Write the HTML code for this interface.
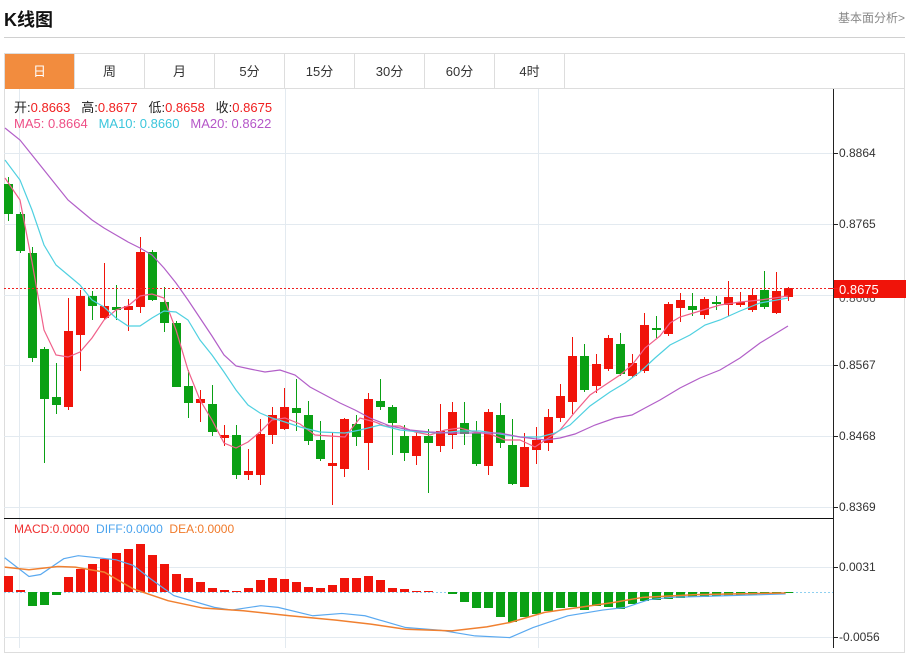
<!DOCTYPE html>
<html><head><meta charset="utf-8">
<style>
*{margin:0;padding:0;box-sizing:border-box}
body{width:909px;height:648px;background:#fff;font-family:"Liberation Sans","Noto Sans CJK SC",sans-serif;position:relative;overflow:hidden}
.title{position:absolute;left:4px;top:6px;font-size:18px;font-weight:bold;color:#111}
.more{position:absolute;right:4px;top:9px;font-size:12px;color:#888}
.hr{position:absolute;left:4px;top:37px;width:901px;height:1px;background:#d0d0d0}
.frame{position:absolute;left:4px;top:53px;width:901px;height:600px;border:1px solid #ddd}
.tabs{position:absolute;left:5px;top:54px;height:35px;display:flex;border-bottom:1px solid #ddd;width:899px}
.tabs div{width:70px;height:35px;border-right:1px solid #ddd;text-align:center;line-height:35px;font-size:13px;color:#333}
.tabs div.on{background:#f28c3e;color:#fff}
.leg{position:absolute;left:14px;font-size:13px;white-space:pre}
svg{position:absolute;left:0;top:0}
</style></head><body>
<div class="title">K线图</div>
<div class="more">基本面分析&gt;</div>
<div class="hr"></div>
<div class="frame"></div>
<div class="tabs"><div class="on">日</div><div>周</div><div>月</div><div>5分</div><div>15分</div><div>30分</div><div>60分</div><div>4时</div></div>
<svg id="s" width="909" height="648"></svg>
<div class="leg" style="top:97px;color:#222">开:<span style="color:#f02020">0.8663</span>   高:<span style="color:#f02020">0.8677</span>   低:<span style="color:#f02020">0.8658</span>   收:<span style="color:#f02020">0.8675</span></div>
<div class="leg" style="top:116px"><span style="color:#ee4f86">MA5: 0.8664</span>   <span style="color:#3cc6dc">MA10: 0.8660</span>   <span style="color:#b556c8">MA20: 0.8622</span></div>
<div class="leg" style="top:522px;font-size:12px"><span style="color:#f03030">MACD:0.0000</span>  <span style="color:#4aa3ee">DIFF:0.0000</span>  <span style="color:#f07a2a">DEA:0.0000</span></div>
<script>
var s='';
function L(x1,y1,x2,y2,c,w,extra){s+='<line x1="'+x1+'" y1="'+y1+'" x2="'+x2+'" y2="'+y2+'" stroke="'+c+'" stroke-width="'+(w||1)+'" '+(extra||'')+'/>';}
function R(x,y,w,h,c){s+='<rect x="'+x+'" y="'+y+'" width="'+w+'" height="'+Math.max(h,1)+'" fill="'+c+'"/>';}
function P(pts,c,w){s+='<polyline fill="none" stroke="'+c+'" stroke-width="'+(w||1.2)+'" points="'+pts.map(function(p){return p.join(',')}).join(' ')+'"/>';}
function T(x,y,t,c,f){s+='<text x="'+x+'" y="'+y+'" font-size="'+(f||12)+'" fill="'+(c||'#333')+'" font-family="Liberation Sans,sans-serif">'+t+'</text>';}
var G='#e3eaf0';
[153,224,295,365,436,507].forEach(function(y){L(4,y+.5,833,y+.5,G);});
[567,637].forEach(function(y){L(4,y+.5,833,y+.5,G);});
[19,285,538].forEach(function(x){L(x+.5,89,x+.5,648,G);});
L(904.5,89,904.5,648,'#ddd');
// candles: [top,bottom,high,low,color]
var C=[[184,214,177,221,'g'],[214,251,212,253,'g'],[253,358,247,362,'g'],[349,399,347,463,'g'],[397,405,363,414,'g'],[331,407,298,410,'r'],[296,335,290,371,'r'],[296,306,291,320,'g'],[306,318,263,320,'r'],[307,310,285,320,'g'],[306,310,299,331,'r'],[252,307,237,313,'r'],[252,300,250,301,'g'],[302,323,287,332,'g'],[323,387,321,387,'g'],[386,403,370,418,'g'],[399,403,390,422,'r'],[404,432,385,436,'g'],[435,438,425,446,'r'],[435,475,425,479,'g'],[471,475,449,480,'r'],[434,475,419,485,'r'],[415,435,407,444,'r'],[407,429,388,430,'r'],[408,413,379,431,'g'],[415,441,401,445,'g'],[440,459,421,461,'g'],[463,466,432,505,'r'],[419,469,418,477,'r'],[424,437,415,446,'g'],[399,443,393,470,'r'],[401,407,379,410,'g'],[407,423,405,455,'g'],[436,453,425,461,'g'],[436,456,431,465,'r'],[436,443,429,493,'g'],[431,446,404,452,'r'],[412,435,402,449,'r'],[423,434,402,445,'g'],[433,464,421,466,'g'],[412,466,409,475,'r'],[415,443,403,448,'g'],[445,484,419,485,'g'],[447,487,433,487,'r'],[440,450,427,464,'r'],[417,443,409,451,'r'],[396,418,384,422,'r'],[356,402,337,414,'r'],[356,390,344,392,'g'],[364,386,354,393,'r'],[338,369,335,371,'r'],[344,374,333,376,'g'],[363,376,354,378,'r'],[325,371,313,373,'r'],[328,330,316,338,'g'],[304,334,302,336,'r'],[300,308,293,322,'r'],[306,310,293,316,'g'],[299,315,297,319,'r'],[302,304,296,310,'g'],[297,305,281,316,'r'],[302,305,292,307,'r'],[295,310,289,312,'r'],[290,307,271,309,'g'],[291,313,272,314,'r'],[288,297,287,301,'r']];
C.forEach(function(c,i){var x=8+12*i;var col=c[4]=='r'?'#f0140a':'#0aa014';L(x+.5,c[2],x+.5,c[3],col,1);R(x-4,c[0],9,c[1]-c[0],col);});
P([[5,178],[20,200],[32,262],[44,330],[56,355],[68,357],[80,352],[92,338],[104,320],[116,310],[128,306],[140,296],[152,294],[164,298],[176,330],[188,370],[200,400],[212,420],[224,443],[236,448],[248,442],[260,432],[272,420],[285,418],[300,424],[315,435],[345,437],[360,418],[375,422],[385,426],[400,426],[415,432],[430,435],[445,430],[460,428],[475,432],[490,434],[505,440],[520,440],[535,447],[550,437],[560,430],[575,412],[590,395],[605,385],[620,375],[632,365],[645,348],[660,336],[670,323],[680,317],[700,311],[720,305],[740,302],[760,300],[788,296]],'#f0608a');
P([[5,160],[20,180],[32,210],[44,245],[56,265],[68,275],[80,285],[92,300],[104,307],[116,318],[128,326],[140,326],[152,318],[164,311],[176,312],[188,320],[200,340],[212,355],[224,372],[236,390],[248,405],[260,413],[272,418],[285,422],[300,427],[320,432],[345,433],[360,430],[380,425],[400,430],[420,432],[440,433],[460,431],[480,431],[500,434],[520,437],[540,437],[555,433],[570,425],[590,406],[610,392],[625,383],[640,372],[655,358],[670,345],[690,335],[705,325],[720,320],[740,311],[760,303],[788,298]],'#4fd0e0');
P([[5,128],[20,140],[32,155],[44,170],[56,185],[68,200],[80,210],[92,220],[104,228],[116,235],[128,242],[140,248],[152,255],[164,268],[176,283],[188,300],[200,318],[212,336],[224,355],[236,366],[250,369],[265,372],[280,370],[295,375],[310,387],[325,395],[340,403],[355,410],[370,418],[390,426],[410,430],[430,432],[450,433],[475,433],[500,433],[520,437],[545,440],[560,438],[575,434],[595,425],[615,418],[632,415],[645,408],[660,400],[680,388],[700,378],[720,370],[740,358],[760,343],[788,326]],'#b25fc8');
// price line
L(4,288.5,833,288.5,'#f02020',1,'stroke-dasharray="2,2"');
// MACD bars
var M=[576,590,606,605,595,577,569,564,559,553,549,544,555,564,574,578,582,588,590,591,588,580,578,579,582,587,588,585,578,578,576,580,588,589,591,591,592,594,602,608,608,617,622,617,614,611,608,607,610,606,607,609,604,601,600,599,598,597,597,596,596,595,595,594,594,593];
var Z=592;
L(4,Z+.5,833,Z+.5,'#8fd0f0',1,'stroke-dasharray="2,2"');
M.forEach(function(y,i){var x=8+12*i;if(y<Z)R(x-4,y,9,Z-y,'#f0140a');else if(y>Z)R(x-4,Z,9,y-Z,'#0aa014');});
function mp(a){return a.map(function(p){return [p[0]/1.726,500+p[1]/2.98];});}
P(mp([[8,172],[50,228],[70,222],[110,175],[135,166],[200,178],[230,195],[260,235],[300,285],[370,320],[400,328],[450,315],[480,320],[540,345],[590,338],[630,345],[700,380],[760,388],[820,405],[880,410],[920,380],[980,345],[1040,328],[1080,320],[1120,297],[1160,290],[1200,288],[1356,280]]),'#5aa9f0');
P(mp([[8,200],[50,208],[100,198],[130,200],[180,215],[230,265],[290,300],[350,322],[420,330],[500,345],[580,358],[640,370],[700,385],[780,390],[840,378],[880,365],[940,335],[1000,320],[1060,305],[1110,290],[1200,282],[1356,277]]),'#f08030',1.5);
// axis
L(833.5,89,833.5,648,'#222');
L(4,518.5,833,518.5,'#111');
[[153,'0.8864'],[224,'0.8765'],[365,'0.8567'],[436,'0.8468'],[507,'0.8369'],[567,'0.0031'],[637,'-0.0056']].forEach(function(a){L(833,a[0]+.5,838,a[0]+.5,'#222');T(839,a[0]+4,a[1],'#333',12);});
T(839,302,'0.8666','#555',12);
R(834,280,72,18,'#f0140a');
L(829,288.5,838,288.5,'#f02020');
T(839,294,'0.8675','#fff',13);
document.getElementById('s').innerHTML=s;
</script>
</body></html>
